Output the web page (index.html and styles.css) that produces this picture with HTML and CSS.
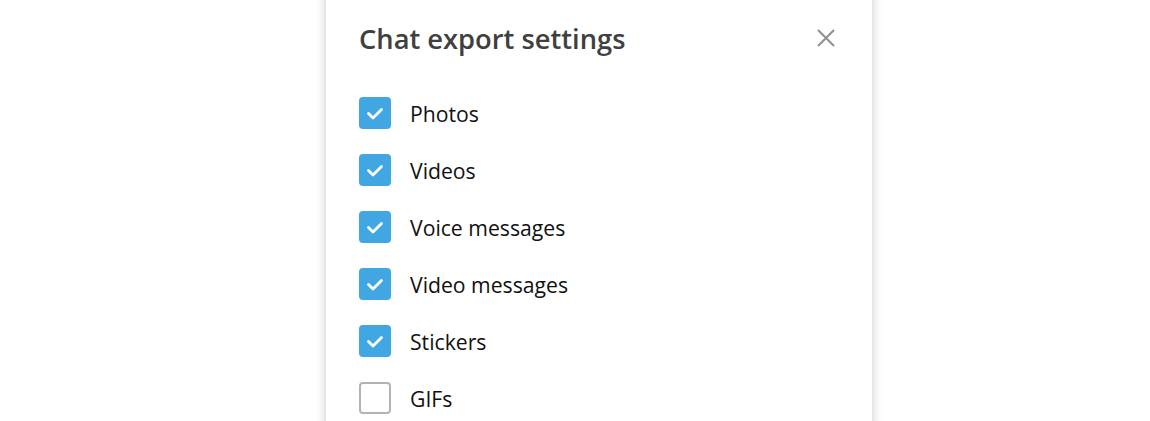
FILE: index.html
```html
<!DOCTYPE html>
<html>
<head>
<meta charset="utf-8">
<link rel="stylesheet" href="styles.css">
</head>
<body>
<div class="dialog">
  <div class="header">
    <h1 class="title">Chat export settings</h1>
    <button class="close" aria-label="Close">
      <svg width="20" height="20" viewBox="0 0 20 20"><path d="M2 2 L18 18 M18 2 L2 18" stroke="#8f8f8f" stroke-width="2" fill="none"/></svg>
    </button>
  </div>
  <ul class="options">
    <li class="option"><span class="box checked"><svg viewBox="0 0 32 32" width="32" height="32"><path d="M9.5 16.5 L14 21 L22.5 12.5" stroke="#fff" stroke-width="2.8" fill="none" stroke-linecap="round" stroke-linejoin="round"/></svg></span><span class="label">Photos</span></li>
    <li class="option"><span class="box checked"><svg viewBox="0 0 32 32" width="32" height="32"><path d="M9.5 16.5 L14 21 L22.5 12.5" stroke="#fff" stroke-width="2.8" fill="none" stroke-linecap="round" stroke-linejoin="round"/></svg></span><span class="label">Videos</span></li>
    <li class="option"><span class="box checked"><svg viewBox="0 0 32 32" width="32" height="32"><path d="M9.5 16.5 L14 21 L22.5 12.5" stroke="#fff" stroke-width="2.8" fill="none" stroke-linecap="round" stroke-linejoin="round"/></svg></span><span class="label">Voice messages</span></li>
    <li class="option"><span class="box checked"><svg viewBox="0 0 32 32" width="32" height="32"><path d="M9.5 16.5 L14 21 L22.5 12.5" stroke="#fff" stroke-width="2.8" fill="none" stroke-linecap="round" stroke-linejoin="round"/></svg></span><span class="label">Video messages</span></li>
    <li class="option"><span class="box checked"><svg viewBox="0 0 32 32" width="32" height="32"><path d="M9.5 16.5 L14 21 L22.5 12.5" stroke="#fff" stroke-width="2.8" fill="none" stroke-linecap="round" stroke-linejoin="round"/></svg></span><span class="label">Stickers</span></li>
    <li class="option"><span class="box"></span><span class="label">GIFs</span></li>
  </ul>
</div>
</body>
</html>
```
FILE: styles.css
```css
html, body {
  margin: 0;
  padding: 0;
  background: #ffffff;
  height: 100%;
  overflow: hidden;
}
body {
  font-family: "Open Sans", "Noto Sans", sans-serif;
}
.dialog {
  width: 546px;
  margin-left: 326px;
  margin-top: -20px;
  padding: 40px 33px 40px 33px;
  box-sizing: border-box;
  background: #ffffff;
  box-shadow: 0 0 10px rgba(0, 0, 0, 0.22);
  min-height: 500px;
}
.header {
  display: flex;
  justify-content: space-between;
  align-items: center;
  height: 38px;
}
.title {
  margin: 0;
  font-size: 27.3px;
  font-weight: 600;
  color: #404040;
  line-height: 38px;
}
.close {
  border: 0;
  background: none;
  padding: 0;
  width: 20px;
  height: 20px;
  margin-right: 3px;
  margin-top: -2px;
}
.close svg { display: block; }
.options {
  list-style: none;
  margin: 0;
  padding: 0;
  margin-top: 39px;
  display: flex;
  flex-direction: column;
  gap: 25px;
}
.option {
  display: flex;
  align-items: center;
  gap: 19px;
  height: 32px;
}
.box {
  width: 32px;
  height: 32px;
  box-sizing: border-box;
  border-radius: 4px;
  border: 2px solid #b3b3b3;
  flex: none;
  display: flex;
  align-items: center;
  justify-content: center;
}
.box.checked {
  background: #40a7e3;
  border: 0;
}
.box svg { display: block; }
.label {
  font-size: 21.2px;
  color: #111111;
}
```
